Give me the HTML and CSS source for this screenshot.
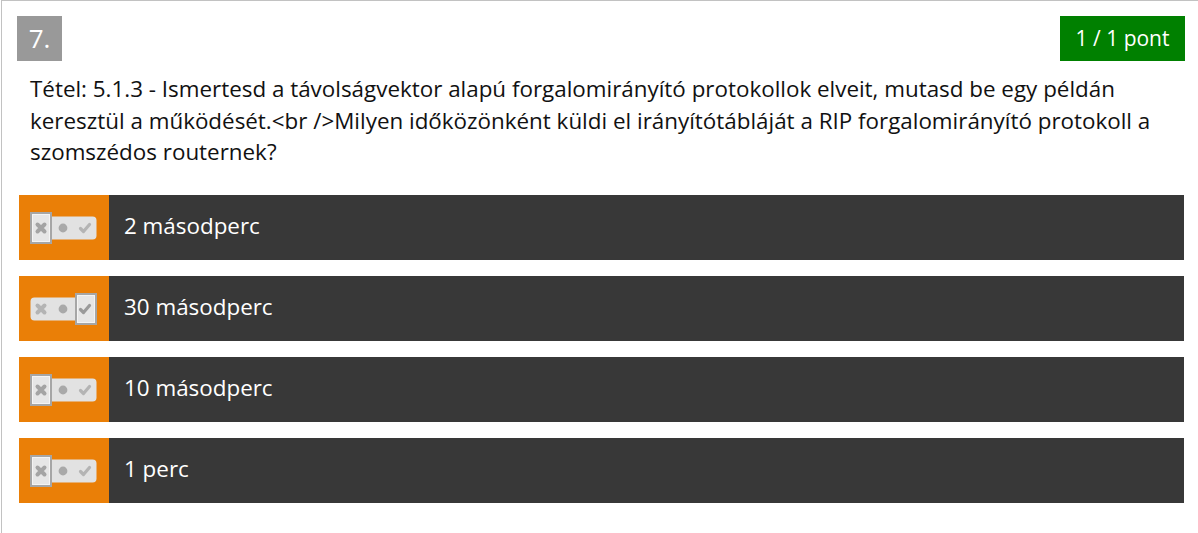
FILE: index.html
```html
<!DOCTYPE html>
<html lang="hu">
<head>
<meta charset="utf-8">
<title>Kérdés 7</title>
<link rel="stylesheet" href="styles.css">
</head>
<body>
<div class="question">
  <div class="q-head">
    <div class="q-num">7.</div>
    <div class="q-score">1 / 1 pont</div>
  </div>
  <p class="q-text">Tétel: 5.1.3 - Ismertesd a távolságvektor alapú forgalomirányító protokollok elveit, mutasd be egy példán keresztül a működését.&lt;br /&gt;Milyen időközönként küldi el irányítótábláját a RIP forgalomirányító protokoll a szomszédos routernek?</p>
  <div class="answers">
    <div class="answer">
      <div class="answer-mark">
        <svg class="toggle" width="68" height="32" viewBox="0 0 68 32">
          <rect x="0.5" y="4.5" width="66" height="23" rx="4" fill="#e2e2e2"/>
          <rect x="1" y="1" width="20" height="30" fill="#e6e6e6" stroke="#a6a6a6" stroke-width="2"/>
          <rect x="2.5" y="2.5" width="17" height="27" fill="none" stroke="#f4f4f4" stroke-width="1"/>
          <path d="M7.5 12.5 L14.5 19.5 M14.5 12.5 L7.5 19.5" stroke="#a4a4a4" stroke-width="4" stroke-linecap="round"/>
          <circle cx="33" cy="16" r="4.4" fill="#a9a9a9"/>
          <path d="M50.5 16.5 L53.5 19.5 L59.5 12.5" fill="none" stroke="#b4b4b4" stroke-width="3.2" stroke-linecap="round" stroke-linejoin="round"/>
        </svg>
      </div>
      <div class="answer-text">2 másodperc</div>
    </div>
    <div class="answer">
      <div class="answer-mark">
        <svg class="toggle" width="68" height="32" viewBox="0 0 68 32">
          <rect x="0.5" y="4.5" width="66" height="23" rx="4" fill="#e2e2e2"/>
          <rect x="46" y="1" width="20" height="30" fill="#e6e6e6" stroke="#a6a6a6" stroke-width="2"/>
          <rect x="47.5" y="2.5" width="17" height="27" fill="none" stroke="#f4f4f4" stroke-width="1"/>
          <path d="M7.5 12.5 L14.5 19.5 M14.5 12.5 L7.5 19.5" stroke="#b4b4b4" stroke-width="4" stroke-linecap="round"/>
          <circle cx="33" cy="16" r="4.4" fill="#a9a9a9"/>
          <path d="M50.5 16.5 L53.5 19.5 L59.5 12.5" fill="none" stroke="#9a9a9a" stroke-width="3.2" stroke-linecap="round" stroke-linejoin="round"/>
        </svg>
      </div>
      <div class="answer-text">30 másodperc</div>
    </div>
    <div class="answer">
      <div class="answer-mark">
        <svg class="toggle" width="68" height="32" viewBox="0 0 68 32">
          <rect x="0.5" y="4.5" width="66" height="23" rx="4" fill="#e2e2e2"/>
          <rect x="1" y="1" width="20" height="30" fill="#e6e6e6" stroke="#a6a6a6" stroke-width="2"/>
          <rect x="2.5" y="2.5" width="17" height="27" fill="none" stroke="#f4f4f4" stroke-width="1"/>
          <path d="M7.5 12.5 L14.5 19.5 M14.5 12.5 L7.5 19.5" stroke="#a4a4a4" stroke-width="4" stroke-linecap="round"/>
          <circle cx="33" cy="16" r="4.4" fill="#a9a9a9"/>
          <path d="M50.5 16.5 L53.5 19.5 L59.5 12.5" fill="none" stroke="#b4b4b4" stroke-width="3.2" stroke-linecap="round" stroke-linejoin="round"/>
        </svg>
      </div>
      <div class="answer-text">10 másodperc</div>
    </div>
    <div class="answer">
      <div class="answer-mark">
        <svg class="toggle" width="68" height="32" viewBox="0 0 68 32">
          <rect x="0.5" y="4.5" width="66" height="23" rx="4" fill="#e2e2e2"/>
          <rect x="1" y="1" width="20" height="30" fill="#e6e6e6" stroke="#a6a6a6" stroke-width="2"/>
          <rect x="2.5" y="2.5" width="17" height="27" fill="none" stroke="#f4f4f4" stroke-width="1"/>
          <path d="M7.5 12.5 L14.5 19.5 M14.5 12.5 L7.5 19.5" stroke="#a4a4a4" stroke-width="4" stroke-linecap="round"/>
          <circle cx="33" cy="16" r="4.4" fill="#a9a9a9"/>
          <path d="M50.5 16.5 L53.5 19.5 L59.5 12.5" fill="none" stroke="#b4b4b4" stroke-width="3.2" stroke-linecap="round" stroke-linejoin="round"/>
        </svg>
      </div>
      <div class="answer-text">1 perc</div>
    </div>
  </div>
</div>
</body>
</html>
```
FILE: styles.css
```css
html, body {
  margin: 0;
  padding: 0;
  background: #ffffff;
  overflow: hidden;
}

body {
  font-family: "Open Sans", "Noto Sans", sans-serif;
  color: #111111;
}

.question {
  margin-left: 1px;
  border-top: 1px solid #c2c2c2;
  border-left: 1px solid #c2c2c2;
  padding: 15px 13px 30px 15px;
  min-height: 533px;
  box-sizing: border-box;
}

.q-head {
  display: flex;
  justify-content: space-between;
  align-items: flex-start;
}

.q-num {
  width: 45px;
  height: 45px;
  background: #999999;
  color: #ffffff;
  font-size: 26px;
  line-height: 45px;
  text-align: center;
}

.q-score {
  height: 45px;
  padding: 0 15.5px;
  background: #008000;
  color: #ffffff;
  font-size: 21px;
  line-height: 45px;
}

.q-text {
  margin: 12px 0 0 0;
  padding: 0 13px;
  font-size: 22.4px;
  line-height: 31.5px;
}

.answers {
  margin: 27.5px 1px 0 2px;
  display: flex;
  flex-direction: column;
  gap: 16px;
}

.answer {
  display: flex;
  height: 65px;
  background: #383838;
}

.answer-mark {
  width: 90px;
  flex: none;
  background: #ea7f07;
  display: flex;
  align-items: center;
  padding-left: 11px;
  box-sizing: border-box;
}

.toggle {
  display: block;
}

.answer-text {
  display: flex;
  align-items: center;
  padding: 0 0 4px 15px;
  color: #ffffff;
  font-size: 22.4px;
}
```
